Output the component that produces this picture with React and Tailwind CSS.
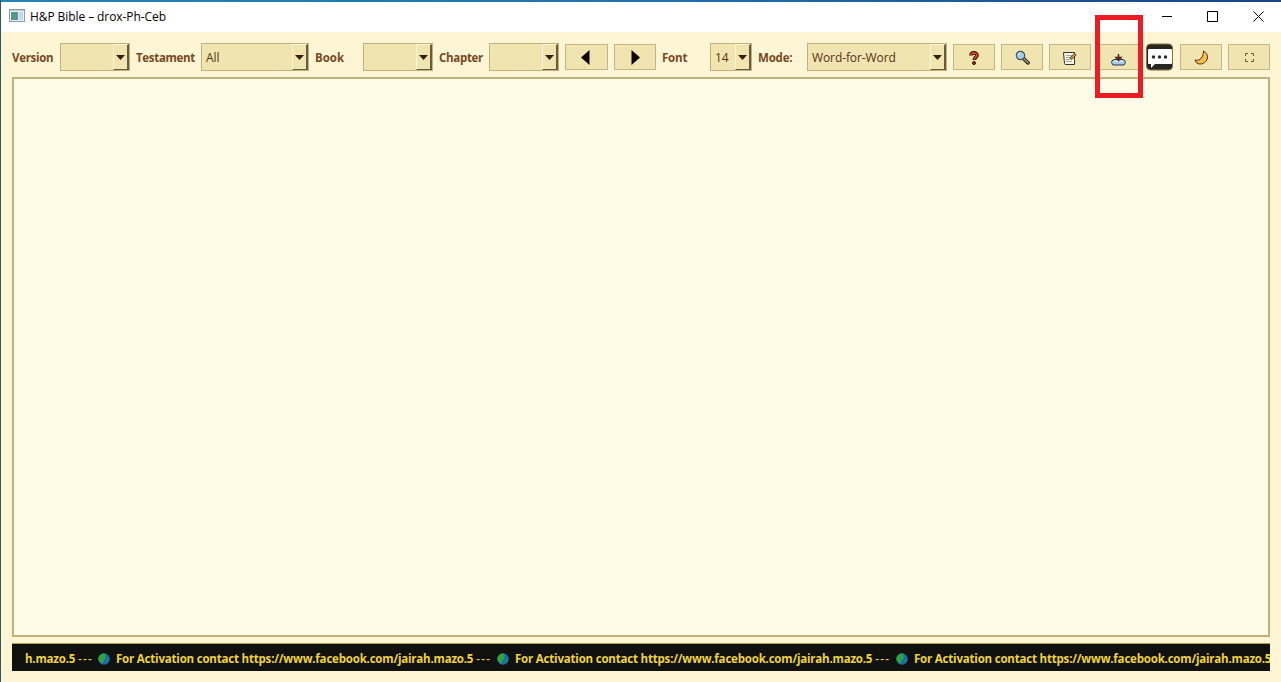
import React from "react";

function Label({ className, children }) {
  return <span className={`mt-[2px] shrink-0 whitespace-nowrap text-[11.5px] font-bold leading-4 text-[#774a22] ${className}`}>{children}</span>;
}

function Combo({ value, className }) {
  return (
    <div className={`flex h-7 shrink-0 border border-[#c0b082] bg-[#f0e4b0] text-[12px] leading-[27px] text-[#593116] ${className}`}>
      <span className="flex-1 whitespace-nowrap pl-1 tracking-[-0.1px]">{value}</span>
      <span className="flex w-4 items-center justify-center border-b border-l border-r-2 border-t border-b-[#6a5c38] border-l-[#fff6cf] border-r-[#6a5c38] border-t-[#fff6cf]">
        <svg className="h-[5px] w-[9px] shrink-0" viewBox="0 0 9 5"><path d="M0 0h9L4.500 5z" fill="#3a1c08" /></svg>
      </span>
    </div>
  );
}

function Button({ className = "w-[42px]", children }) {
  return (
    <button className={`flex h-[26px] shrink-0 items-center justify-center border border-[#c5b684] bg-[#f0e4b0] ${className}`}>{children}</button>
  );
}

function Globe() {
  return (
    <svg className="mx-[5px] mt-px h-3 w-3 shrink-0" viewBox="0 0 12 12">
      <circle cx="6" cy="6" r="5.8" fill="#176dad" />
      <path d="M.8 4C2.500 0 6 0 8 1L7 3 8 5 6 7 5 9 4 11 1 8 .3 6z" fill="#2fa43a" />
      <path d="M9 7l2-1-1 3-1 1z" fill="#26923f" />
    </svg>
  );
}

function TickerItem() {
  return (
    <>
      <Globe />
      <span className="flex w-[377px] shrink-0 whitespace-pre pl-px">
        <span className="tracking-[-0.195px]">For Activation contact https://www.facebook.com/jairah.mazo.5</span>
        <span className="ml-[3px] font-semibold tracking-[1.3px]">---</span>
      </span>
    </>
  );
}

export default function App() {
  return (
    <div className="flex h-[682px] w-[1281px] flex-col overflow-hidden border-l border-l-[#2b5a66] bg-[#fdf5d3] font-['Open_Sans','Noto_Sans',sans-serif]">
      <div className="h-[2px] shrink-0 bg-gradient-to-r from-[#2384b5] via-[#2271ae] to-[#164488]" />
      <header className="flex h-[30px] shrink-0 items-center bg-white pl-2">
        <svg className="mb-[3px] h-[13px] w-4" viewBox="0 0 16 13">
          <rect x=".5" y=".5" width="15" height="12" fill="#e9f0f5" stroke="#8d9aa7" />
          <rect x="2" y="3" width="7" height="8" fill="#55988b" />
          <rect x="10" y="3" width="4" height="8" fill="#c6d8e5" />
          <path d="M1 1.500h14" stroke="#b9c8d4" />
        </svg>
        <span className="ml-[5px] whitespace-nowrap text-[12px] leading-4 tracking-[-0.08px] text-black">H&amp;P Bible – drox-Ph-Ceb</span>
        <div className="ml-auto flex items-center pb-[2px] pr-[17px]">
          <svg className="h-[11px] w-[11px]" viewBox="0 0 11 11"><path d="M0 5.500h10" stroke="#000" /></svg>
          <svg className="ml-[34px] h-[11px] w-[11px]" viewBox="0 0 11 11"><path d="M.5.5h10v10H.5z" fill="none" stroke="#000" /></svg>
          <svg className="ml-[35px] h-[11px] w-[11px]" viewBox="0 0 11 11"><path d="M.5.5l10 10M10.500.5l-10 10" stroke="#000" /></svg>
        </div>
      </header>

      <div className="flex h-[45px] shrink-0 items-center gap-[6px] bg-[#fdf5d3] pl-[11px] pt-[5px]">
        <Label className="w-[42px] tracking-[-0.3px]">Version</Label>
        <Combo className="w-[70px]" />
        <Label className="w-[59px] tracking-[-0.3px]">Testament</Label>
        <Combo className="w-[108px]" value="All" />
        <Label className="w-[42px]">Book</Label>
        <Combo className="w-[70px]" />
        <Label className="w-[44px] tracking-[-0.3px]">Chapter</Label>
        <Combo className="w-[70px]" />
        <Button className="w-[43px]"><svg className="mr-[2px] h-[15px] w-[9px]" viewBox="0 0 9 15"><path d="M8.500 0v15L0 7.500z" fill="#100500" /></svg></Button>
        <Button><svg className="h-[15px] w-[9px]" viewBox="0 0 9 15"><path d="M.5 0v15L9 7.500z" fill="#100500" /></svg></Button>
        <Label className="w-[42px] tracking-[-0.2px]">Font</Label>
        <Combo className="w-[42px]" value="14" />
        <Label className="w-[43px] tracking-[-0.2px]">Mode:</Label>
        <Combo className="w-[140px]" value="Word-for-Word" />
        <Button>
          <svg className="mt-px h-[14px] w-[10px]" viewBox="0 0 10 14">
            <path d="M2 4.500C2 1 8 1 8 4.200 8 6.500 5.300 6 5.300 9" fill="none" stroke="#260d05" strokeWidth="3.600" />
            <path d="M2 4.300C2.200 1.300 7.800 1.300 7.800 4.200 7.800 6.300 5.300 6 5.300 8.500" fill="none" stroke="#d64726" strokeWidth="1.900" />
            <circle cx="5" cy="12" r="1.500" fill="#c83b20" stroke="#260d05" />
          </svg>
        </Button>
        <Button>
          <svg className="h-[15px] w-[15px]" viewBox="0 0 15 15">
            <path d="M8.500 8.500l4.500 4.300" stroke="#382d24" strokeWidth="3.800" strokeLinecap="round" />
            <path d="M9 9l4 3.700" stroke="#9b8d7d" strokeWidth="1.700" strokeLinecap="round" />
            <circle cx="5.500" cy="5.500" r="4.200" fill="#9ed0ef" stroke="#49535b" strokeWidth="1.200" />
            <path d="M3 5q.5-2 2.500-2.200" fill="none" stroke="#e6f7ff" />
          </svg>
        </Button>
        <Button>
          <svg className="mr-px mt-[2px] h-[15px] w-[15px]" viewBox="0 0 15 15">
            <path d="M1.500 1.500h11v12h-9q-1 0-1-1z" fill="#faf6e6" stroke="#34302a" />
            <path d="M4 4.500h6M4 6.500h5M4 8.500h4M4 10.500h6" stroke="#a5a29a" />
            <path d="M8.500 8l5-5" stroke="#3e2d19" strokeWidth="2.800" />
            <path d="M9 7.500l4-4" stroke="#ddb14d" strokeWidth="1.400" />
          </svg>
        </Button>
        <div className="relative shrink-0">
          <Button>
            <svg className="mt-[5px] h-[12px] w-[15px]" viewBox="0 0 15 12">
              <path d="M3 5.500h9q2.500 1 2.500 3l-1.500 2.500H2L.5 8.500q0-2 2.500-3z" fill="#a9cae9" stroke="#26354b" />
              <path d="M3.500 6.500h8l1.500 1.500H2z" fill="#d4e9fa" />
              <path d="M7.500 0v4M5 3.500h5L7.500 6.500z" fill="#b8351d" stroke="#4f231b" strokeWidth="1.500" />
            </svg>
          </Button>
          <div className="absolute left-[-2px] top-[-29px] h-[83px] w-[48px] border-[5px] border-[#ed1c24]" />
        </div>
        <button className="h-[28px] w-[29px] shrink-0">
          <svg className="h-[28px] w-[29px]" viewBox="0 0 29 28">
            <rect x="1.500" y="1" width="26" height="26" rx="4" fill="#272620" stroke="#807341" />
            <path d="M4 6h22q1 0 1 1v13q0 1-1 1H10l-4 4v-4H4q-1 0-1-1V7q0-1 1-1z" fill="#fff" />
            <g fill="#292724"><circle cx="8.500" cy="14" r="1.700" /><circle cx="14.500" cy="14" r="1.700" /><circle cx="20.500" cy="14" r="1.700" /></g>
          </svg>
        </button>
        <Button>
          <svg className="h-[15px] w-[15px]" viewBox="0 0 15 15">
            <path d="M9.500 1C17 5 13 14 6 14 3.500 14 1.500 12.500 1 10 6 11.500 9.500 7 9.500 1z" fill="#f8bd45" stroke="#49301b" />
          </svg>
        </Button>
        <Button>
          <svg className="mt-px h-[9px] w-[9px]" viewBox="0 0 9 9"><path d="M.5 3V.5H3M6 .5h2.500V3M8.500 6v2.500H6M3 8.500H.5V6" fill="none" stroke="#6b5837" /></svg>
        </Button>
      </div>

      <main className="ml-[11px] h-[560px] w-[1258px] shrink-0 border-2 border-[#c0b07b] bg-[#fffbe7]" />

      <footer className="ml-[11px] mt-[6px] flex h-[28px] w-[1258px] shrink-0 items-center overflow-hidden border-t border-t-[#b29f4b] bg-[#11110f] pl-[13px] pt-[2px] text-[11.5px] font-bold leading-4 text-[#efd43a]">
        <span className="flex w-[68px] shrink-0 whitespace-nowrap">
          <span className="tracking-[-0.195px]">h.mazo.5</span>
          <span className="ml-[3px] font-semibold tracking-[1.3px]">---</span>
        </span>
        <TickerItem />
        <TickerItem />
        <TickerItem />
      </footer>
    </div>
  );
}
